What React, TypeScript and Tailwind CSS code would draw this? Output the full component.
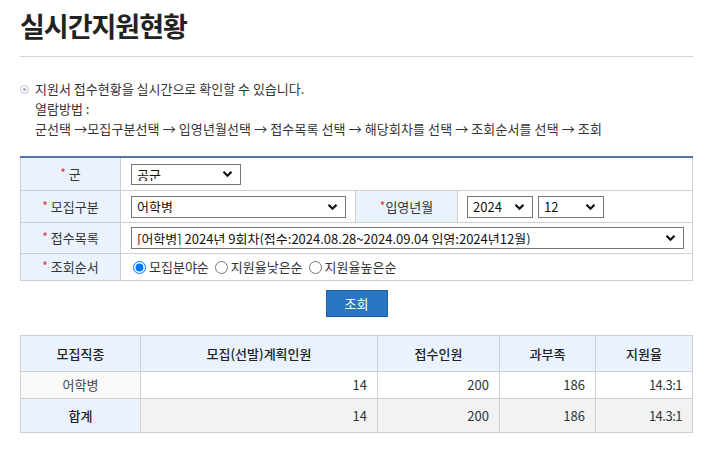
import React from 'react';

const font = { fontFamily: '"Noto Sans CJK KR", "Noto Sans", sans-serif' };

function Chevron() {
  return (
    <svg width="11" height="8" viewBox="0 0 11 8" className="pointer-events-none absolute right-[8px] top-1/2 -translate-y-1/2">
      <path d="M1.5 1.8 L5.5 5.8 L9.5 1.8" fill="none" stroke="#111" strokeWidth="2.2" />
    </svg>
  );
}

function Select({ value, className }: { value: string; className: string }) {
  return (
    <div className={`relative ${className}`}>
      <select
        defaultValue={value}
        className="h-full w-full appearance-none border border-[#767676] bg-white pl-[5px] pr-6 text-[13px] leading-none text-[#111] outline-none"
      >
        <option>{value}</option>
      </select>
      <Chevron />
    </div>
  );
}

function Label({ text, tight }: { text: string; tight?: boolean }) {
  return (
    <span>
      <span className="text-[#d33] text-[12px] align-[1px]">*</span>
      {tight ? '' : ' '}
      {text}
    </span>
  );
}

export default function App() {
  const steps = '군선택 →모집구분선택 → 입영년월선택 → 접수목록 선택 → 해당회차를 선택 → 조회순서를 선택 → 조회';

  return (
    <div className="w-[713px] h-[465px] bg-white px-[20px] text-[#333]" style={font}>
      {/* title */}
      <h1 className="pt-[9px] text-[27px] font-bold leading-[34px] tracking-[-1px] text-[#222]">실시간지원현황</h1>
      <div className="mt-[13px] border-t border-[#d5d5d5]" />

      {/* guide */}
      <div className="mt-[22px] flex text-[13px] leading-[20px] text-[#333]">
        <span className="mr-[6px] mt-[6px] flex h-[9px] w-[9px] shrink-0 items-center justify-center rounded-full border border-[#b8c4d6]">
          <span className="h-[3px] w-[3px] rounded-full bg-[#9aa8c0]" />
        </span>
        <div>
          <p>지원서 접수현황을 실시간으로 확인할 수 있습니다.</p>
          <p>열람방법 :</p>
          <p className="tracking-[0.1px]">{steps}</p>
        </div>
      </div>

      {/* search form */}
      <div className="mt-[17px] border-t-2 border-[#5a74a6] text-[13px]">
        <div className="grid grid-cols-[100px_1fr] h-[33px] border-b border-x border-[#cfcfcf]">
          <div className="flex items-center justify-center bg-[#eaf3fd] border-r border-[#cfcfcf]"><Label text="군" /></div>
          <div className="flex items-center pl-[10px]">
            <Select value="공군" className="w-[110px] h-[21px]" />
          </div>
        </div>
        <div className="grid grid-cols-[100px_235px_102px_1fr] h-[32px] border-b border-x border-[#cfcfcf]">
          <div className="flex items-center justify-center bg-[#eaf3fd] border-r border-[#cfcfcf]"><Label text="모집구분" /></div>
          <div className="flex items-center pl-[10px] border-r border-[#cfcfcf]">
            <Select value="어학병" className="w-[215px] h-[22px]" />
          </div>
          <div className="flex items-center justify-center bg-[#eaf3fd] border-r border-[#cfcfcf]"><Label text="입영년월" tight /></div>
          <div className="flex items-center gap-[5px] pl-[9px]">
            <Select value="2024" className="w-[66px] h-[22px]" />
            <Select value="12" className="w-[66px] h-[22px]" />
          </div>
        </div>
        <div className="grid grid-cols-[100px_1fr] h-[31px] border-b border-x border-[#cfcfcf]">
          <div className="flex items-center justify-center bg-[#eaf3fd] border-r border-[#cfcfcf]"><Label text="접수목록" /></div>
          <div className="flex items-center pl-[10px] pr-[8px]">
            <Select value="[어학병] 2024년 9회차(접수:2024.08.28~2024.09.04 입영:2024년12월)" className="w-full h-[22px]" />
          </div>
        </div>
        <div className="grid grid-cols-[100px_1fr] h-[27px] border-b border-x border-[#cfcfcf]">
          <div className="flex items-center justify-center bg-[#eaf3fd] border-r border-[#cfcfcf]"><Label text="조회순서" /></div>
          <div className="flex items-center pl-[12px] text-[13px]">
            {['모집분야순', '지원율낮은순', '지원율높은순'].map((t, i) => (
              <label key={t} className="mr-[6px] flex items-center">
                <input type="radio" name="order" defaultChecked={i === 0} className="m-0 mr-[3px] h-[13px] w-[13px]" />
                {t}
              </label>
            ))}
          </div>
        </div>
      </div>

      <div className="mt-[9px] flex justify-center">
        <button className="h-[27px] w-[62px] border border-[#1d5fa8] bg-[#2b75c5] text-[13px] text-white">조회</button>
      </div>

      {/* result table */}
      <table className="mt-[18px] w-full border-collapse text-[13px] text-[#333]">
        <colgroup>
          <col className="w-[120px]" />
          <col className="w-[237px]" />
          <col className="w-[122px]" />
          <col className="w-[96px]" />
          <col />
        </colgroup>
        <thead>
          <tr className="h-[36px] bg-[#eaf3fd]">
            {['모집직종', '모집(선발)계획인원', '접수인원', '과부족', '지원율'].map(h => (
              <th key={h} className="border border-[#cfcfcf] font-medium text-[#222]">{h}</th>
            ))}
          </tr>
        </thead>
        <tbody>
          <tr className="h-[27px]">
            <td className="border border-[#cfcfcf] bg-[#f9f9f9] text-center text-[#444]">어학병</td>
            <td className="border border-[#cfcfcf] pr-[10px] text-right">14</td>
            <td className="border border-[#cfcfcf] pr-[10px] text-right">200</td>
            <td className="border border-[#cfcfcf] pr-[10px] text-right">186</td>
            <td className="border border-[#cfcfcf] pr-[10px] text-right tracking-[-0.5px]">14.3:1</td>
          </tr>
          <tr className="h-[34px] bg-[#f2f2f2]">
            <td className="border border-[#cfcfcf] bg-[#eaf3fd] text-center font-medium text-[#222]">합계</td>
            <td className="border border-[#cfcfcf] pr-[10px] text-right">14</td>
            <td className="border border-[#cfcfcf] pr-[10px] text-right">200</td>
            <td className="border border-[#cfcfcf] pr-[10px] text-right">186</td>
            <td className="border border-[#cfcfcf] pr-[10px] text-right tracking-[-0.5px]">14.3:1</td>
          </tr>
        </tbody>
      </table>
    </div>
  );
}
